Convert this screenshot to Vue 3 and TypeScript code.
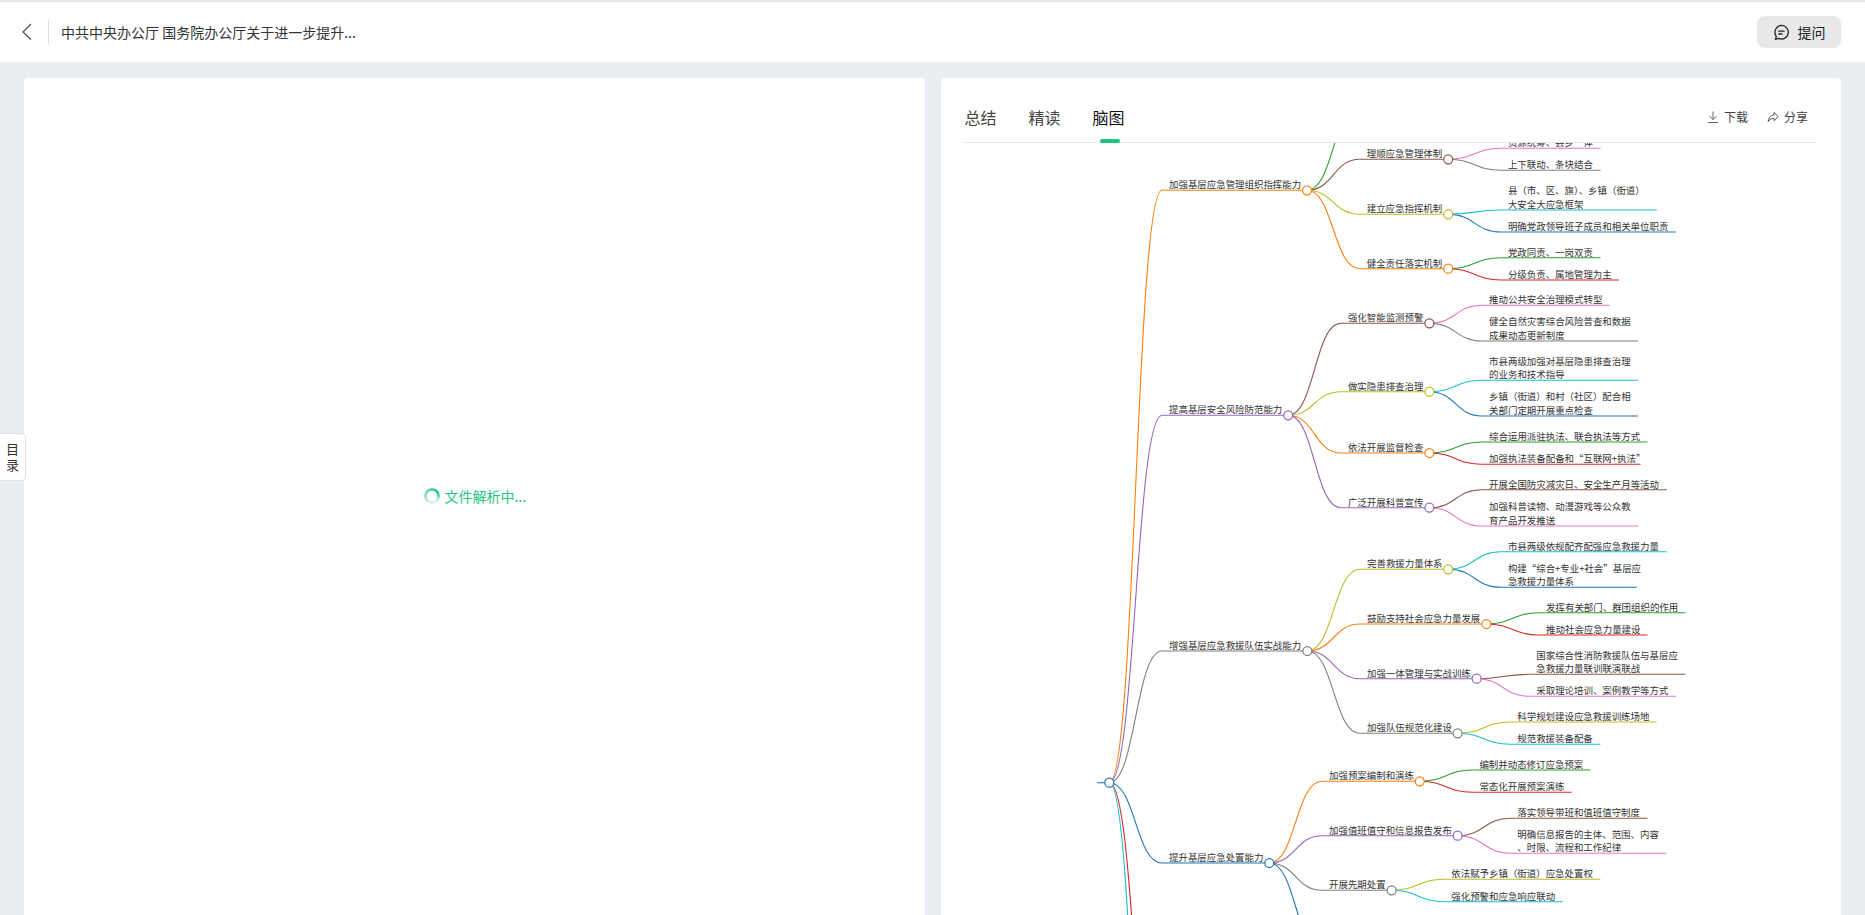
<script setup lang="ts">
import { computed } from 'vue'

interface MapNode {
  lines: string[]
  y: number
  end: number
  color: string
  children?: MapNode[]
}

const BLUE = '#1f77b4'
const ORANGE = '#ff7f0e'
const GREEN = '#2ca02c'
const RED = '#d62728'
const PURPLE = '#9467bd'
const BROWN = '#8c564b'
const PINK = '#e377c2'
const GREY = '#7f7f7f'
const OLIVE = '#bcbd22'
const CYAN = '#17becf'

const GAP = 52.7
const ROOT = { x: 1109.3, y: 782.7 }

function n(text: string, y: number, end: number, color: string, children?: MapNode[]): MapNode {
  return { lines: text ? text.split('|') : [], y, end, color, children }
}

const tree: MapNode[] = [
  n('加强基层应急管理组织指挥能力', 190.3, 1307, ORANGE, [
    n('', 105, 1448, GREEN),
    n('理顺应急管理体制', 159.3, 1448.2, BROWN, [
      n('资源统筹、县乡一体', 148.3, 1600.5, PINK),
      n('上下联动、条块结合', 170.3, 1600.5, GREY),
    ]),
    n('建立应急指挥机制', 214.3, 1448.2, OLIVE, [
      n('县（市、区、旗）、乡镇（街道）|大安全大应急框架', 210, 1656.7, CYAN),
      n('明确党政领导班子成员和相关单位职责', 232, 1676, BLUE),
    ]),
    n('健全责任落实机制', 268.7, 1448.2, ORANGE, [
      n('党政同责、一岗双责', 257.7, 1600.5, GREEN),
      n('分级负责、属地管理为主', 280, 1619, RED),
    ]),
  ]),
  n('提高基层安全风险防范能力', 415.3, 1288.2, PURPLE, [
    n('强化智能监测预警', 323.3, 1429.4, BROWN, [
      n('推动公共安全治理模式转型', 305.3, 1609.6, PINK),
      n('健全自然灾害综合风险普查和数据|成果动态更新制度', 341, 1638, GREY),
    ]),
    n('做实隐患排查治理', 391.7, 1429.4, OLIVE, [
      n('市县两级加强对基层隐患排查治理|的业务和技术指导', 380.3, 1638, CYAN),
      n('乡镇（街道）和村（社区）配合相|关部门定期开展重点检查', 416, 1638, BLUE),
    ]),
    n('依法开展监督检查', 453, 1429.4, ORANGE, [
      n('综合运用派驻执法、联合执法等方式', 442, 1647.5, GREEN),
      n('加强执法装备配备和“互联网+执法”', 464.3, 1640.6, RED),
    ]),
    n('广泛开展科普宣传', 507.7, 1429.4, PURPLE, [
      n('开展全国防灾减灾日、安全生产月等活动', 489.7, 1666.7, BROWN),
      n('加强科普读物、动漫游戏等公众教|育产品开发推送', 526, 1638, PINK),
    ]),
  ]),
  n('增强基层应急救援队伍实战能力', 651, 1307.3, GREY, [
    n('完善救援力量体系', 569.3, 1448.2, OLIVE, [
      n('市县两级依规配齐配强应急救援力量', 551.7, 1666.7, CYAN),
      n('构建“综合+专业+社会”基层应|急救援力量体系', 587.3, 1636.8, BLUE),
    ]),
    n('鼓励支持社会应急力量发展', 624, 1486.4, ORANGE, [
      n('发挥有关部门、群团组织的作用', 612.7, 1685.4, GREEN),
      n('推动社会应急力量建设', 635, 1647.5, RED),
    ]),
    n('加强一体管理与实战训练', 678.7, 1476.6, PURPLE, [
      n('国家综合性消防救援队伍与基层应|急救援力量联训联演联战', 674.3, 1685.4, BROWN),
      n('采取理论培训、案例教学等方式', 696.3, 1676, PINK),
    ]),
    n('加强队伍规范化建设', 733.3, 1457.6, GREY, [
      n('科学规划建设应急救援训练场地', 722, 1656.5, OLIVE),
      n('规范救援装备配备', 744.3, 1600.4, CYAN),
    ]),
  ]),
  n('提升基层应急处置能力', 863, 1269.3, BLUE, [
    n('加强预案编制和演练', 781.3, 1419.7, ORANGE, [
      n('编制并动态修订应急预案', 770, 1590.5, GREEN),
      n('常态化开展预案演练', 792.3, 1571.5, RED),
    ]),
    n('加强值班值守和信息报告发布', 835.7, 1457.6, PURPLE, [
      n('落实领导带班和值班值守制度', 818.3, 1647.4, BROWN),
      n('明确信息报告的主体、范围、内容|、时限、流程和工作纪律', 853.3, 1666.4, PINK),
    ]),
    n('开展先期处置', 890.3, 1391.6, GREY, [
      n('依法赋予乡镇（街道）应急处置权', 879.3, 1600.4, OLIVE),
      n('强化预警和应急响应联动', 901.7, 1562.8, CYAN),
    ]),
    n('', 950, 1400, BLUE),
  ]),
  n('', 1158, 1300, RED),
  n('', 1367, 1300, CYAN),
]

interface DrawnNode {
  key: string
  link: string
  x0: number
  end: number
  y: number
  color: string
  labels: { text: string; y: number }[]
}

const LINE_HEIGHT = 13.7

const drawn = computed(() => {
  const out: DrawnNode[] = []
  const walk = (list: MapNode[], px: number, py: number, path: string) => {
    list.forEach((node, i) => {
      const x0 = px + GAP
      const mid = (px + x0) / 2
      const count = node.lines.length
      out.push({
        key: `${path}-${i}`,
        link: `M${px} ${py}C${mid} ${py} ${mid} ${node.y} ${x0} ${node.y}`,
        x0,
        end: node.end,
        y: node.y,
        color: node.color,
        labels: node.lines.map((text, k) => ({
          text,
          y: node.y - 2 - (count - 1 - k) * LINE_HEIGHT,
        })),
      })
      if (node.children) walk(node.children, node.end, node.y, `${path}-${i}`)
    })
  }
  walk(tree, ROOT.x, ROOT.y, 'n')
  return out
})
</script>

<template>
  <div class="page">
    <header class="topbar">
      <button class="back" aria-label="返回">
        <svg width="10" height="18" viewBox="0 0 10 18" fill="none">
          <path d="M9 1 1 9l8 7.5" stroke="#555" stroke-width="1.3" />
        </svg>
      </button>
      <span class="divider"></span>
      <h1 class="title">中共中央办公厅 国务院办公厅关于进一步提升...</h1>
      <button class="ask">
        <svg width="17" height="17" viewBox="0 0 16 16" fill="none" stroke="#222" stroke-width="1.2">
          <path d="M8 1.4a6.4 6.4 0 1 1-2.7 12.2l-3 .9.8-2.9A6.4 6.4 0 0 1 8 1.4z" stroke-linejoin="round" />
          <path d="M5.3 6.6h5.2M5.3 9.4h3.2" stroke-linecap="round" />
        </svg>
        <span>提问</span>
      </button>
    </header>

    <main class="content">
      <section class="card doc">
        <div class="loading">
          <span class="spinner"></span>
          <span>文件解析中...</span>
        </div>
      </section>

      <section class="card side">
        <div class="tabs">
          <span class="tab">总结</span>
          <span class="tab">精读</span>
          <span class="tab active">脑图</span>
          <div class="actions">
            <span class="action">
              <svg width="12" height="12" viewBox="0 0 12 12" fill="none" stroke="#666">
                <path d="M6 .5v8M2.6 5.2 6 8.6l3.4-3.4M1 11.5h10" />
              </svg>
              下载
            </span>
            <span class="action">
              <svg width="12" height="12" viewBox="0 0 12 12" fill="none" stroke="#555">
                <path d="M7 1.5 11.2 5.6 7 9.7V7.4C4.5 7.4 2.7 8.4 1.2 10.6 1.4 7.2 3.6 4.2 7 3.9z" stroke-linejoin="round" />
              </svg>
              分享
            </span>
          </div>
        </div>

        <div class="map">
          <svg width="852" height="772" viewBox="965 143 852 772" class="map-svg">
            <g v-for="item in drawn" :key="item.key">
              <path :d="item.link" :stroke="item.color" stroke-width="1.1" fill="none" />
              <line :x1="item.x0" :x2="item.end" :y1="item.y" :y2="item.y" :stroke="item.color" stroke-width="1.1" />
            </g>
            <line :x1="ROOT.x - 12" :x2="ROOT.x" :y1="ROOT.y" :y2="ROOT.y" :stroke="BLUE" stroke-width="1.1" />
            <g v-for="item in drawn" :key="item.key + 'c'">
              <text v-for="label in item.labels" :key="label.text" :x="item.x0 + 7" :y="label.y" class="label">{{ label.text }}</text>
              <circle v-if="item.labels.length && item.end < 1490" :cx="item.end" :cy="item.y" r="4.5" fill="#fff" :stroke="item.color" stroke-width="1.25" />
            </g>
            <circle :cx="ROOT.x" :cy="ROOT.y" r="4.5" fill="#fff" :stroke="BLUE" stroke-width="1.25" />
          </svg>
        </div>
      </section>
    </main>

    <div class="toc">
      <span>目</span>
      <span>录</span>
    </div>
  </div>
</template>

<style>
html,
body {
  margin: 0;
  overflow: hidden;
}
</style>

<style scoped>
.page {
  position: relative;
  display: flex;
  flex-direction: column;
  height: 100vh;
  overflow: hidden;
  background: #eaedf1;
  font-family: "Noto Sans CJK SC", "Noto Sans", sans-serif;
  color: #222;
}

.topbar {
  display: flex;
  align-items: center;
  flex: none;
  box-sizing: border-box;
  height: 62px;
  padding: 0 24px 0 22px;
  background: #fff;
  border-top: 2px solid #e8e8e8;
}

.back {
  display: flex;
  width: 26px;
  padding: 0;
  border: 0;
  background: none;
}

.divider {
  width: 1px;
  height: 24px;
  background: #e0e0e0;
}

.title {
  flex: 1;
  margin: 0 0 0 12px;
  font-size: 14px;
  font-weight: 400;
  line-height: 20px;
  color: #333;
}

.ask {
  display: flex;
  align-items: center;
  justify-content: center;
  gap: 8px;
  width: 84px;
  height: 32px;
  padding: 0;
  border: 0;
  border-radius: 8px;
  background: #e8e8e8;
  font: inherit;
  font-size: 14px;
  color: #222;
}

.content {
  display: flex;
  flex: 1;
  gap: 16px;
  min-height: 0;
  padding: 16px 24px 0;
}

.card {
  flex: 1;
  display: flex;
  flex-direction: column;
  min-width: 0;
  background: #fff;
  border-radius: 4px 4px 0 0;
}

.doc {
  align-items: center;
  justify-content: center;
}

.loading {
  display: flex;
  align-items: center;
  gap: 4px;
  margin-left: 2px;
  margin-bottom: 2px;
  font-size: 14px;
  line-height: 20px;
  color: #1cc67f;
}

.spinner {
  width: 16px;
  height: 16px;
  border-radius: 50%;
  background: conic-gradient(from 200deg, #d6f4e7 0deg, #7fdcb5 90deg, #1cc67f 220deg, #d6f4e7 300deg);
  -webkit-mask: radial-gradient(circle, transparent 5px, #000 5.5px);
  mask: radial-gradient(circle, transparent 5px, #000 5.5px);
}

.tabs {
  display: flex;
  align-items: flex-end;
  flex: none;
  gap: 32px;
  height: 64px;
  margin: 0 24px;
  border-bottom: 1px solid #e5e5e5;
}

.tab {
  position: relative;
  padding-bottom: 13px;
  font-size: 16px;
  line-height: 24px;
  color: #444;
}

.tab.active {
  color: #111;
}

.tab.active::after {
  content: "";
  position: absolute;
  left: 7px;
  bottom: -1px;
  width: 20px;
  height: 4px;
  border-radius: 2px;
  background: #1cc67f;
}

.actions {
  display: flex;
  gap: 19px;
  margin-left: auto;
  padding: 0 9px 13px 0;
}

.action {
  display: flex;
  align-items: center;
  gap: 5px;
  font-size: 12px;
  line-height: 24px;
  color: #444;
}

.map {
  flex: 1;
  min-height: 0;
  margin: 0 24px;
  overflow: hidden;
}

.map-svg {
  display: block;
}

.label {
  font-size: 9.45px;
  fill: #333;
}

.toc {
  position: absolute;
  left: 0;
  top: 433px;
  display: flex;
  flex-direction: column;
  align-items: center;
  justify-content: center;
  gap: 2px;
  box-sizing: border-box;
  width: 26px;
  height: 48px;
  background: #fff;
  border: 1px solid #e0e0e0;
  border-left: 0;
  border-radius: 0 5px 5px 0;
  font-size: 13px;
  line-height: 14px;
  color: #333;
}
</style>
